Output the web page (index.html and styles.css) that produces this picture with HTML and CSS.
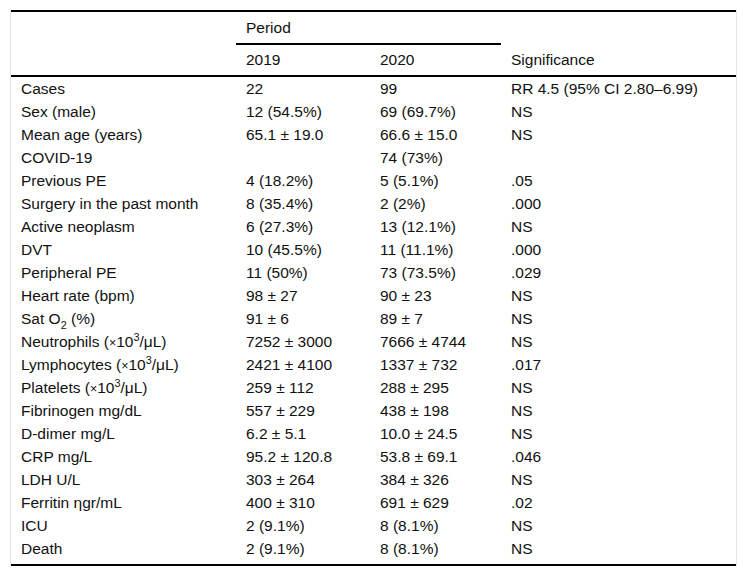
FILE: index.html
```html
<!DOCTYPE html>
<html lang="en">
<head>
<meta charset="utf-8">
<title>Table</title>
<link rel="stylesheet" href="styles.css">
</head>
<body>
<div class="wrap">
<table class="data">
<colgroup>
<col class="c1"><col class="c2"><col class="c3"><col class="c4">
</colgroup>
<thead>
<tr class="h1">
<th></th>
<th colspan="2" class="period">Period</th>
<th rowspan="2" class="sig">Significance</th>
</tr>
<tr class="h2">
<th></th>
<th>2019</th>
<th>2020</th>
</tr>
</thead>
<tbody>
<tr><td>Cases</td><td>22</td><td>99</td><td>RR 4.5 (95% CI 2.80–6.99)</td></tr>
<tr><td>Sex (male)</td><td>12 (54.5%)</td><td>69 (69.7%)</td><td>NS</td></tr>
<tr><td>Mean age (years)</td><td>65.1 ± 19.0</td><td>66.6 ± 15.0</td><td>NS</td></tr>
<tr><td>COVID-19</td><td></td><td>74 (73%)</td><td></td></tr>
<tr><td>Previous PE</td><td>4 (18.2%)</td><td>5 (5.1%)</td><td>.05</td></tr>
<tr><td>Surgery in the past month</td><td>8 (35.4%)</td><td>2 (2%)</td><td>.000</td></tr>
<tr><td>Active neoplasm</td><td>6 (27.3%)</td><td>13 (12.1%)</td><td>NS</td></tr>
<tr><td>DVT</td><td>10 (45.5%)</td><td>11 (11.1%)</td><td>.000</td></tr>
<tr><td>Peripheral PE</td><td>11 (50%)</td><td>73 (73.5%)</td><td>.029</td></tr>
<tr><td>Heart rate (bpm)</td><td>98 ± 27</td><td>90 ± 23</td><td>NS</td></tr>
<tr><td>Sat O<sub>2</sub> (%)</td><td>91 ± 6</td><td>89 ± 7</td><td>NS</td></tr>
<tr><td>Neutrophils (<span class="x">×</span>10<sup>3</sup>/μL)</td><td>7252 ± 3000</td><td>7666 ± 4744</td><td>NS</td></tr>
<tr><td>Lymphocytes (<span class="x">×</span>10<sup>3</sup>/μL)</td><td>2421 ± 4100</td><td>1337 ± 732</td><td>.017</td></tr>
<tr><td>Platelets (<span class="x">×</span>10<sup>3</sup>/μL)</td><td>259 ± 112</td><td>288 ± 295</td><td>NS</td></tr>
<tr><td>Fibrinogen mg/dL</td><td>557 ± 229</td><td>438 ± 198</td><td>NS</td></tr>
<tr><td>D-dimer mg/L</td><td>6.2 ± 5.1</td><td>10.0 ± 24.5</td><td>NS</td></tr>
<tr><td>CRP mg/L</td><td>95.2 ± 120.8</td><td>53.8 ± 69.1</td><td>.046</td></tr>
<tr><td>LDH U/L</td><td>303 ± 264</td><td>384 ± 326</td><td>NS</td></tr>
<tr><td>Ferritin ηgr/mL</td><td>400 ± 310</td><td>691 ± 629</td><td>.02</td></tr>
<tr><td>ICU</td><td>2 (9.1%)</td><td>8 (8.1%)</td><td>NS</td></tr>
<tr><td>Death</td><td>2 (9.1%)</td><td>8 (8.1%)</td><td>NS</td></tr>
</tbody>
</table>
</div>
</body>
</html>
```
FILE: styles.css
```css
html, body {
  margin: 0;
  padding: 0;
  background: #ffffff;
}
body {
  font-family: "Liberation Sans", Arial, Helvetica, sans-serif;
  font-size: 15.5px;
  color: #111111;
}
.wrap {
  margin: 10px 11px 0 10px;
  border-left: 1px solid #e6e6e6;
  border-right: 1px solid #e6e6e6;
}
.data {
  width: 100%;
  table-layout: fixed;
  border-collapse: separate;
  border-spacing: 0;
  border-top: 2px solid #000;
  border-bottom: 2px solid #000;
}
.c1 { width: 225px; }
.c2 { width: 134px; }
.c3 { width: 131px; }
.data th,
.data td {
  padding: 0 10px;
  text-align: left;
  font-weight: normal;
  white-space: nowrap;
}
.h1 th {
  height: 31px;
  vertical-align: middle;
}
.h2 th {
  height: 30px;
  vertical-align: middle;
  border-bottom: 2px solid #000;
}
.period {
  border-bottom: 2px solid #000;
}
.sig {
  vertical-align: bottom !important;
  padding-bottom: 6px !important;
  border-bottom: 2px solid #000;
}
.data td {
  height: 23px;
  line-height: 23px;
  vertical-align: middle;
}
.data tbody tr:last-child td {
  height: 27px;
  vertical-align: top;
}
sup, sub {
  font-size: 0.7em;
  line-height: 0;
  vertical-align: baseline;
  position: relative;
}
sup { top: -0.55em; }
sub { top: 0.45em; }
.x {
  font-size: 0.8em;
  line-height: 0;
}
```
